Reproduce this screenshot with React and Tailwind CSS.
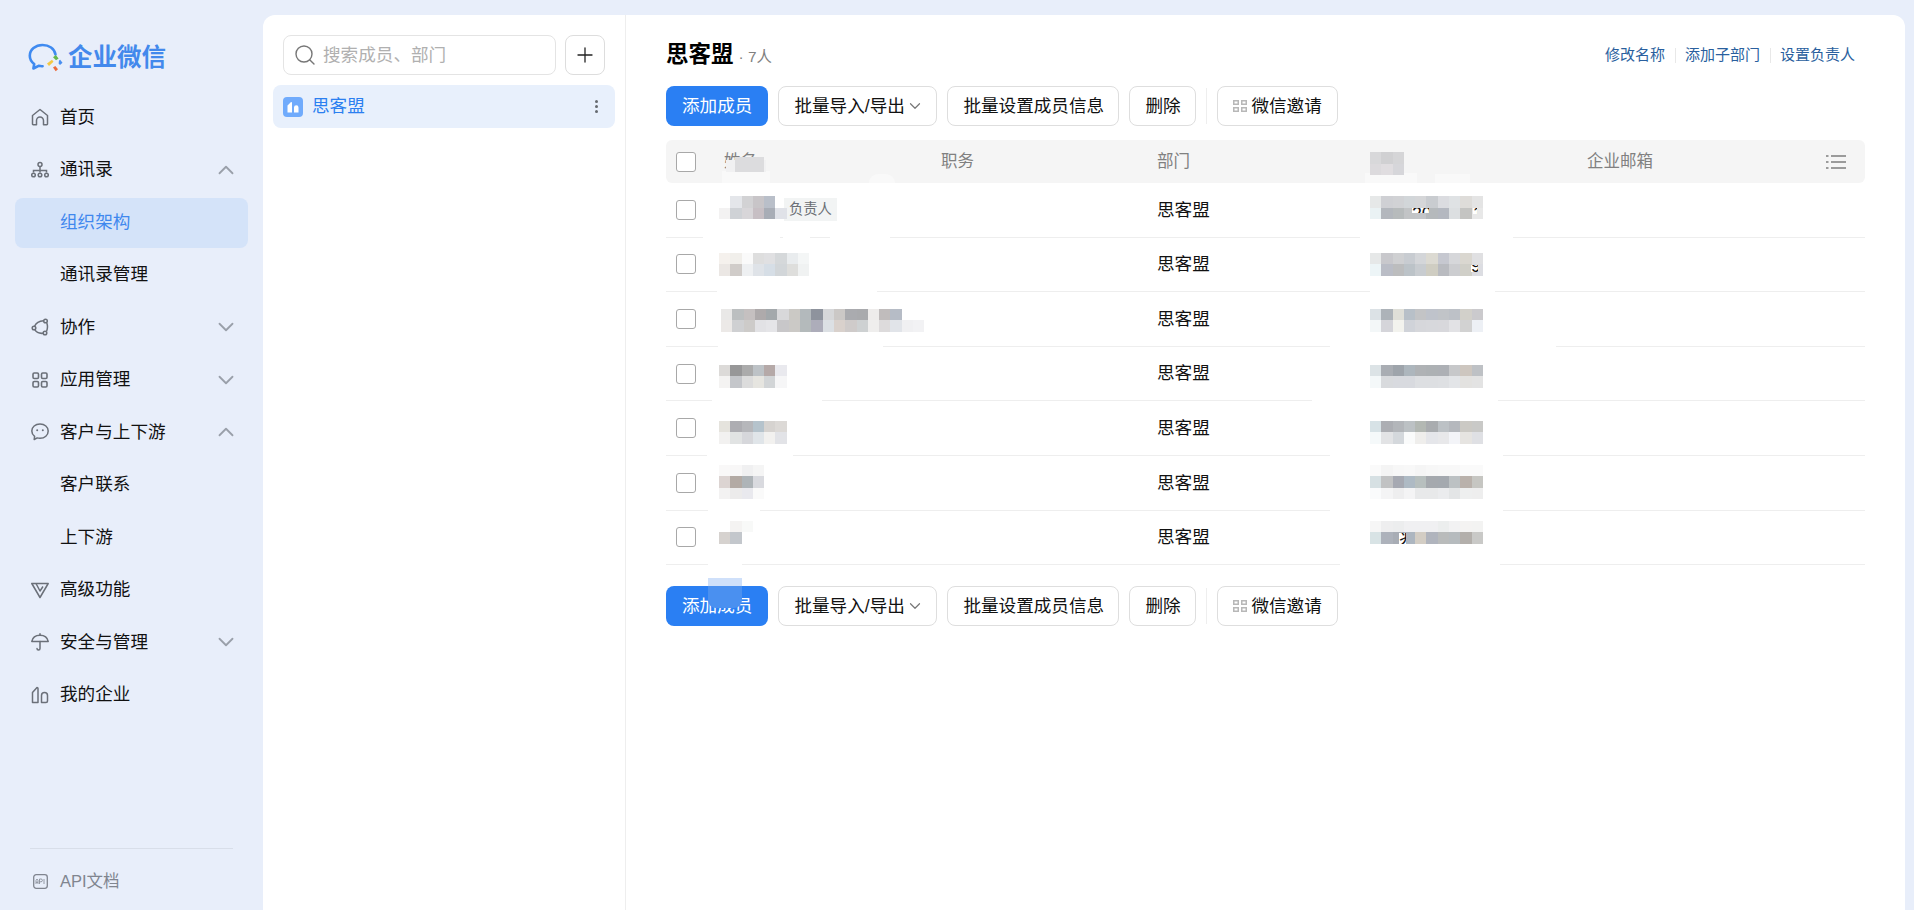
import { ChevronDown, ChevronUp, Plus, Search } from "lucide-react";

const Home = () => (
  <svg width="18" height="18" viewBox="0 0 18 18" fill="none" stroke="currentColor" strokeWidth="1.5" strokeLinejoin="round">
    <path d="M1.500 7.500 9 1.500l7.500 6V16a.7.7 0 0 1-.7.7h-3.300v-4.200a3.500 3.500 0 0 0-7 0v4.200H2.200a.7.7 0 0 1-.7-.7z" />
  </svg>
);

const Org = () => (
  <svg width="18" height="18" viewBox="0 0 18 18" fill="none" stroke="currentColor" strokeWidth="1.5">
    <circle cx="9" cy="3.500" r="2" />
    <circle cx="2.500" cy="14" r="1.800" />
    <circle cx="9" cy="14" r="1.800" />
    <circle cx="15.500" cy="14" r="1.800" />
    <path d="M2.500 11.500V9.500h13v2M9 6v5.500" />
  </svg>
);

const Collab = () => (
  <svg width="18" height="18" viewBox="0 0 18 18" fill="none" stroke="currentColor" strokeWidth="1.500">
    <circle cx="14.500" cy="3" r="1.800" />
    <circle cx="3" cy="10" r="1.800" />
    <circle cx="14" cy="15" r="1.800" />
    <path d="M12.600 2.800C8 3 5 4.800 3.600 8.200M3.800 11.700c1.600 2.800 4.400 4 8.400 3.600M15.800 5c1 2.800 1 5.300-.2 8.200" />
  </svg>
);

const Apps = () => (
  <svg width="18" height="18" viewBox="0 0 18 18" fill="none" stroke="currentColor" strokeWidth="1.600">
    <rect x="2" y="2" width="5.500" height="5.500" rx="1.200" />
    <rect x="10.500" y="2" width="5.500" height="5.500" rx="1.200" />
    <rect x="2" y="10.500" width="5.500" height="5.500" rx="1.200" />
    <rect x="10.500" y="10.500" width="5.500" height="5.500" rx="1.200" />
  </svg>
);

const Chat = () => (
  <svg width="18" height="18" viewBox="0 0 18 18" fill="none" stroke="currentColor" strokeWidth="1.500" strokeLinejoin="round">
    <path d="M9 1C4.300 1 .8 4 .8 8c0 2.200 1.100 4.100 2.800 5.400L3.200 16.500l3-1.600c.9.300 1.800.4 2.800.4 4.700 0 8.200-3.200 8.200-7.300S13.700 1 9 1z" />
    <circle cx="6.200" cy="7.200" r="1" fill="currentColor" stroke="none" />
    <circle cx="11.800" cy="7.200" r="1" fill="currentColor" stroke="none" />
  </svg>
);

const Advanced = () => (
  <svg width="18" height="18" viewBox="0 0 18 18" fill="none" stroke="currentColor" strokeWidth="1.500" strokeLinejoin="round">
    <path d="M.8 2.500h16.400L9 16.500z" />
    <path d="M5 2.500 9 10l3-4.500" />
  </svg>
);

const Umbrella = () => (
  <svg width="18" height="18" viewBox="0 0 18 18" fill="none" stroke="currentColor" strokeWidth="1.500" strokeLinecap="round" strokeLinejoin="round">
    <path d="M.8 8.500C1.500 4.500 4.800 2.200 9 2.200s7.500 2.300 8.200 6.300z" />
    <path d="M9 .8v1.400M9 8.500v7a1.500 1.500 0 0 1-3 0" />
  </svg>
);

const Company = () => (
  <svg width="18" height="18" viewBox="0 0 18 18" fill="none" stroke="currentColor" strokeWidth="1.500" strokeLinejoin="round">
    <path d="M1.500 16.500V6.500L6 1.500c.6 0 1 .4 1 1v14z" />
    <path d="M10.500 16.500v-7a3 3 0 0 1 6 0v5.500a1.500 1.500 0 0 1-1.500 1.500z" />
  </svg>
);

const ApiDoc = () => (
  <svg width="15" height="15" viewBox="0 0 15 15" fill="none">
    <rect x=".7" y=".7" width="13.600" height="13.600" rx="2.500" stroke="currentColor" strokeWidth="1.300" />
    <path d="M3 10V6.500L4 5l1 1.500V10M3 8.300h2M6.500 10V5H8a1.200 1.200 0 0 1 0 2.800H6.500M11 5v5" stroke="currentColor" strokeWidth=".8" />
  </svg>
);

const Logo = () => (
  <svg width="36" height="30" viewBox="0 0 36 30" fill="none">
    <path d="M27.500 11.500C26.500 5.500 21 2 14.500 2 7.500 2 1.800 6.700 1.800 12.800c0 3.300 1.700 6.200 4.400 8.200l-.8 4.500 5.200-2.700c1.300.3 2.600.5 4 .4" stroke="#3f8af0" strokeWidth="2.600" strokeLinecap="round" strokeLinejoin="round" />
    <path d="m19 20.500 5-3.800 1.500 2-4.500 4.300z" fill="#f4c842" />
    <path d="m25 14.200 2.800-2.200 2.800 3.500-2.600 1.800z" fill="#65b84a" />
    <path d="m31 17.500 1.200-.8 2.300 3-2.500 2.200-1.400-1.400z" fill="#4a8ff0" />
    <path d="m25 24.500 2.300-1.500 2.700 3.300-2.300 2z" fill="#ec6a3c" />
  </svg>
);

const QrIcon = () => (
  <svg width="14" height="14" viewBox="0 0 14 14" fill="#b8b8b8">
    <path d="M0 1h6v5H0zm1.500 1.500v2h3v-2zM8 1h6v5H8zm1.500 1.500v2h3v-2zM0 8h6v5H0zm1.500 1.500v2h3v-2zM8 8h6v5H8zm1.500 1.500v2h3v-2z" />
  </svg>
);

const ColumnsIcon = () => (
  <svg width="20" height="16" viewBox="0 0 20 16" stroke="#7d7d7d" strokeWidth="1.500">
    <path d="M0 2h2.500M5 2h15M0 8h2.500M5 8h15M0 14h2.500M5 14h15" />
  </svg>
);

const NAV = [
  { label: "首页", icon: Home },
  { label: "通讯录", icon: Org, arrow: "up" },
  { label: "组织架构", sub: true, active: true },
  { label: "通讯录管理", sub: true },
  { label: "协作", icon: Collab, arrow: "down" },
  { label: "应用管理", icon: Apps, arrow: "down" },
  { label: "客户与上下游", icon: Chat, arrow: "up" },
  { label: "客户联系", sub: true },
  { label: "上下游", sub: true },
  { label: "高级功能", icon: Advanced },
  { label: "安全与管理", icon: Umbrella, arrow: "down" },
  { label: "我的企业", icon: Company },
];

// redacted cells of each row, top position is from the row's top edge
const ROWS = [
  {
    owner: true,
    name: { top: 13, cells: [
      ["transparent", "e4e6ea", "d2d2d4", "c8c5c8", "b9bfc9"],
      ["f3f2f2", "cfd2d6", "d8d6d9", "c7bfc4", "a8adb6", "e0e2e8"],
    ] },
    phone: { top: 13, cells: [
      ["e6e8e8", "cfd0d4", "d1d2d5", "d2d6d9", "d5d6d8", "c9ccd0", "dbdce0", "dfe2e4", "dedcd9", "e4e4e4"],
      ["eaf2f4", "b3b7bd", "b7bbbc", "c2c4c6", "c3c5c8", "b5b9bc", "b4b8c0", "dcdfe1", "c4c4c2", "e8e8e8"],
    ] },
    gaps: [[703, 77], [783, 27], [830, 60], [1360, 153]],
    specks: [
      { x: 746, y: 25, w: 17, h: 5, text: "20", shift: -6 },
      { x: 807, y: 25, w: 4, h: 6, text: "1", shift: -6 },
    ],
  },
  {
    name: { top: 15.4, cells: [
      ["f5f1ed", "f1efeb", "fafafa", "dedede", "e0e0e2", "d5d8da", "e9ecee", "f4f6f6"],
      ["ebe7e4", "d0ccc9", "eef0f2", "dfe3e8", "d6dee6", "d2d6d9", "dededc", "f0f2f2"],
    ] },
    phone: { top: 15.4, cells: [
      ["e6e8e8", "c8c8cc", "cfd0d2", "c8ccd1", "d4d6d9", "dcdad2", "c6c8d0", "d6d7da", "dad7d0", "e0e0e2"],
      ["edf5f7", "babdc6", "bcbdbe", "bcc3c8", "c8ccd0", "cfcdc2", "b9bbc0", "cccdd0", "d0cfc8", "dcdde2"],
    ] },
    gaps: [[717, 160], [1370, 125]],
    specks: [{ x: 805, y: 27, w: 7, h: 7, text: "9", shift: -11 }],
  },
  {
    name: { top: 16.8, left: 2, cells: [
      ["e9e8e7", "bcbfc0", "c5c0c0", "aeaaab", "a3a8ab", "d8d8da", "cbc9c5", "b3b9bc", "8e939d", "d6d7d9", "cbc8c6", "aaabaf", "a9aaad", "eeeceb", "c0bcbc", "b6bcc6"],
      ["ece9e7", "cfd0d2", "cdcbc9", "e2e2e5", "e5e5e8", "c8c7c9", "cbc9c6", "b4babb", "adadba", "dce0e4", "d9d1cc", "cfcbca", "ced1d2", "efeeed", "dddbdc", "e1e4e9", "f0f0f2", "f2f2f4"],
    ] },
    phone: { top: 16.8, cells: [
      ["dce2e6", "adb3b9", "dfdfd8", "b8c0c8", "c3c4c6", "bfc3cb", "c1c4c8", "bdc1c7", "d2d0ca", "cbcacd"],
      ["f3f7f8", "d5d5da", "f3f3ee", "d0d3d9", "d6d7db", "d7d8dc", "d8d8dc", "e2e2e5", "d2d2d2", "edf0f5"],
    ] },
    gaps: [[718, 165], [1330, 226]],
  },
  {
    name: { top: 18, cells: [
      ["dcdad8", "979798", "ababab", "bdc2c6", "b5a9a8", "e9e9ee"],
      ["f4f3f2", "c4c6ca", "dcdcdc", "e6e5e0", "d2d5d7", "f6f6f7"],
    ] },
    phone: { top: 18, cells: [
      ["dce3e6", "a9adb3", "9ea4ab", "adb6bd", "afb2b5", "adb1b4", "adb0b5", "c7c8ca", "cdc6bf", "bec1c5"],
      ["f4f8f9", "d8dadd", "d8dadf", "d8dadf", "dddfe2", "dddfe2", "dee0e3", "e3e5e8", "e3e2e0", "e3e3e3"],
    ] },
    gaps: [[712, 110], [1312, 186]],
  },
  {
    name: { top: 19.600, cells: [
      ["e5e3dd", "adadb2", "b6b7bb", "b5c3cc", "d6d3d0", "dcd9d6"],
      ["f2f1f0", "e1e3e3", "d6d7db", "e0e5e9", "f2f1ef", "e2e3e7"],
    ] },
    phone: { top: 19.600, cells: [
      ["d7e2e6", "acaeb3", "b3b6ba", "bcc1c4", "b3b8b3", "a9acaf", "bcc1c5", "b5b8bd", "cbc9c4", "c9c9c7"],
      ["f5f9fa", "e2e3e5", "d4d8dc", "fafbfb", "efeeec", "e5e6ea", "e8e8ea", "f3f4f8", "e6e4e1", "dfe0e4"],
    ] },
    gaps: [[707, 86], [1330, 173]],
  },
  {
    name: { top: 9, cells: [
      ["f9f8f8", "f8f7f7", "f0f0f1", "f5f5f5"],
      ["dcd4d2", "b3aaa4", "aeb4b8", "d9dadf"],
      ["f3f2f2", "ecebeb", "e9e9ee", "fafafa"],
    ] },
    phone: { top: 9, cells: [
      ["fafafa", "f4f4f4", "f7f7f7", "f8f8f8", "f5f5f5", "f7f7f7", "f8f8f8", "f8f8f8", "fafafa", "fafafa"],
      ["d6e0e3", "c1c2c3", "a6a9b2", "aebac4", "b7bfbe", "a5a9ae", "a4a9af", "bcc1c3", "b9b1ab", "c6c6c2"],
      ["fafbfc", "f4f4f5", "eeeeef", "f4f4f5", "e8e9ea", "e8e9ea", "ebecee", "e3e5e6", "eeefef", "eeeeee"],
    ] },
    gaps: [[708, 52], [1330, 173]],
  },
  {
    name: { top: 10.400, cells: [
      ["transparent", "f4f3f2", "f8f9f8"],
      ["d6d2cf", "c3c7cc"],
    ] },
    phone: { top: 10.400, cells: [
      ["f6f6f6", "eeeeef", "ecedee", "f0f0f2", "f0f0f2", "f0f0f2", "eceeee", "f2f2f3", "f4f3f2", "f3f3f2"],
      ["d8e3e5", "adb2bb", "a8adb5", "adb6c0", "d3cdc4", "b0b4bd", "b9bbbb", "b6bbbe", "b3afab", "c9c9c7"],
    ] },
    gaps: [[708, 34], [1340, 160]],
    specks: [{ x: 733, y: 22, w: 7, h: 11, text: "兆", shift: -7 }],
  },
];

const TABLE_LEFT = 666;

function Mosaic({ left, top, cells }) {
  return (
    <div className="absolute" style={{ left, top }}>
      {cells.map((line, i) => (
        <div key={i} className="flex">
          {line.map((c, j) => (
            <div
              key={j}
              className="w-[11.300px] h-[11.500px]"
              style={{ backgroundColor: c === "transparent" ? c : `#${c}` }}
            />
          ))}
        </div>
      ))}
    </div>
  );
}

function NavItem({ item }) {
  const Icon = item.icon;
  return (
    <div
      className={`flex items-center h-[50px] rounded-lg pr-[15px] pb-[2px] ${item.sub ? "pl-[45px]" : "pl-[16px]"} ${item.active ? "bg-[#d4e3f9] text-[#3f88ee]" : "text-[#111111]"}`}
    >
      {Icon && (
        <span className="w-[18px] h-[18px] mr-[11px] text-[#6b7079] shrink-0">
          <Icon />
        </span>
      )}
      <span className="flex-1">{item.label}</span>
      {item.arrow === "up" && <ChevronUp size={26} strokeWidth={1.7} className="text-[#9aa0aa] -mr-[6px]" />}
      {item.arrow === "down" && <ChevronDown size={26} strokeWidth={1.7} className="text-[#9aa0aa] -mr-[6px]" />}
    </div>
  );
}

function Sidebar() {
  return (
    <aside className="w-[263px] h-full shrink-0 flex flex-col text-[17.6px]">
      <div className="flex items-center h-[30px] mt-[43px] ml-[28px] mb-[20px]">
        <Logo />
        <span className="ml-[4px] text-[24.500px] font-semibold text-[#4389ec]">企业微信</span>
      </div>
      <nav className="flex flex-col gap-[2.500px] mx-[15px]">
        {NAV.map((item) => (
          <NavItem key={item.label} item={item} />
        ))}
      </nav>
      <div className="mt-auto mx-[30px] border-t border-[#d8dee9] pt-[20px] pb-[17px]">
        <div className="flex items-center h-[24px] text-[#80858f] text-[16.500px]">
          <span className="ml-[3px] mr-[12px] text-[#80858f] flex">
            <ApiDoc />
          </span>
          API文档
        </div>
      </div>
    </aside>
  );
}

function DeptPane() {
  return (
    <div className="w-[363px] shrink-0 border-r border-[#eeeeee] pt-[20px] text-[17.6px]">
      <div className="flex gap-[9px] pl-[20px] pr-[20px]">
        <div className="flex-1 flex items-center h-[40px] border border-[#e4e4e4] rounded-lg pl-[9px] text-[#b0b0b0]">
          <Search size={24} strokeWidth={1.4} className="text-[#777777] mr-[6px]" />
          搜索成员、部门
        </div>
        <div className="w-[40px] h-[40px] flex items-center justify-center border border-[#dddddd] rounded-lg text-[#222222]">
          <Plus size={24} strokeWidth={1.3} />
        </div>
      </div>
      <div className="flex items-center h-[43px] mx-[10px] mt-[10px] pl-[10px] pr-[17px] rounded-lg bg-[#e8f0fc] text-[#2b7ff0]">
        <svg width="20" height="20" viewBox="0 0 20 20" className="mr-[9px]">
          <rect width="20" height="20" rx="4" fill="#70abfc" />
          <path d="M4.500 15.500V8.500L8 5c.6 0 1 .4 1 1v9.500zM11 15.500v-5a2.200 2.200 0 0 1 4.500 0v5z" fill="#ffffff" />
        </svg>
        <span className="flex-1">思客盟</span>
        <span className="flex flex-col gap-[2px]">
          <i className="w-[3px] h-[3px] rounded-full bg-[#666a70]" />
          <i className="w-[3px] h-[3px] rounded-full bg-[#666a70]" />
          <i className="w-[3px] h-[3px] rounded-full bg-[#666a70]" />
        </span>
      </div>
    </div>
  );
}

function Toolbar({ smear }) {
  const btn = "relative h-[40px] px-[15px] flex items-center whitespace-nowrap border border-[#dedede] rounded-lg bg-white";
  return (
    <div className="relative flex items-center gap-[10px] text-[17.6px] text-[#111111]">
      <div className="relative h-[40px] px-[16px] flex items-center rounded-lg bg-[#2a7ff3] text-white">
        添加成员
        {smear && (
          <>
            <div className="absolute left-[42px] top-[-8px] w-[34px] h-[8px] bg-[#cfe0fa]" />
            <div className="absolute left-[42px] top-0 w-[34px] h-[22px] rounded-b-lg bg-[#4a90f0]" />
          </>
        )}
      </div>
      <div className={`${btn} w-[159px]`}>
        批量导入/导出
        <ChevronDown size={18} strokeWidth={1.6} className="ml-[1px] shrink-0 text-[#777777]" />
      </div>
      <div className={`${btn} w-[172px]`}>批量设置成员信息</div>
      <div className={`${btn} w-[67px]`}>删除</div>
      <div className="w-px h-[36px] bg-[#eeeeee]" />
      <div className={btn}>
        <span className="mr-[4px] flex">
          <QrIcon />
        </span>
        微信邀请
      </div>
    </div>
  );
}

function Cell({ className, children }) {
  return <div className={`flex items-center ${className}`}>{children}</div>;
}

function MemberTable() {
  return (
    <div>
      <div className="relative flex items-center h-[43px] mt-[14px] rounded-md bg-[#f5f5f5] text-[16.500px] text-[#808080]">
        <Cell className="w-[58px] pl-[10px]">
          <span className="w-[20px] h-[20px] rounded-[3px] border border-[#a8a8a8] bg-white" />
        </Cell>
        <Cell className="w-[217px]">姓名</Cell>
        <Cell className="w-[216px]">职务</Cell>
        <Cell className="w-[213px]">部门</Cell>
        <Cell className="w-[217px]" />
        <Cell className="flex-1">企业邮箱</Cell>
        <span className="mr-[19px] flex">
          <ColumnsIcon />
        </span>
        {/* redaction smudges over the header */}
        <div className="absolute left-[56px] top-[31px] w-[48px] h-[12px] bg-[#f9f9f9]" />
        <div className="absolute left-[60px] top-[20px] w-[40px] h-[12px] bg-[#f1f1f2]" />
        <div className="absolute left-[69px] top-[17px] w-[29px] h-[15px] bg-[#dcdcde]" />
        <div className="absolute left-[203px] top-[34px] w-[26px] h-[9px] rounded-t-full bg-[#f9f9f9]" />
        <div className="absolute left-[699px] top-[33px] w-[52px] h-[10px] bg-[#f9f9f9]" />
        <div className="absolute left-[769px] top-[34px] w-[35px] h-[9px] bg-[#f9f9f9]" />
        <Mosaic
          left={704}
          top={12}
          cells={[
            ["d8d8da", "d0d0d2", "d5d5d7"],
            ["dcdadd", "e0dde0", "d6d6da"],
          ]}
        />
      </div>
      {ROWS.map((row, i) => (
        <div key={i} className="relative flex items-center h-[54.600px] border-b border-[#eeeeee] text-[17.6px] text-[#111111]">
          <Cell className="w-[58px] pl-[10px]">
            <span className="w-[20px] h-[20px] rounded-[3px] border border-[#a8a8a8] bg-white" />
          </Cell>
          <Cell className="w-[217px] pl-[60px]">
            {row.owner && (
              <span className="flex items-center h-[23px] px-[5px] bg-[#f2f4f4] text-[14.300px] text-[#6b6f75]">负责人</span>
            )}
          </Cell>
          <Cell className="w-[216px]" />
          <Cell className="w-[213px]">思客盟</Cell>
          {row.gaps.map(([x, w]) => (
            <div key={x} className="absolute bottom-[-1px] h-px bg-white" style={{ left: x - TABLE_LEFT, width: w }} />
          ))}
          <Mosaic left={53 + (row.name.left || 0)} top={row.name.top} cells={row.name.cells} />
          <Mosaic left={704} top={row.phone.top} cells={row.phone.cells} />
          {/* bits of the number left showing through the redaction */}
          {(row.specks || []).map((s) => (
            <div
              key={s.x}
              className="absolute overflow-hidden whitespace-nowrap bg-white leading-[24px] text-[#111111]"
              style={{ left: s.x, top: s.y, width: s.w, height: s.h }}
            >
              <div style={{ marginTop: s.shift }}>{s.text}</div>
            </div>
          ))}
        </div>
      ))}
    </div>
  );
}

function MemberPane() {
  return (
    <div className="flex-1 min-w-0 pl-[40px] pr-[40px] pt-[25px]">
      <div className="flex items-center justify-between h-[30px] mb-[16px] pr-[10px]">
        <div className="flex items-baseline">
          <span className="text-[22.500px] font-bold text-black">思客盟</span>
          <span className="ml-[5px] text-[15.400px] text-[#808080]">· 7人</span>
        </div>
        <div className="flex items-center text-[15px] text-[#2a5f9e]">
          <span>修改名称</span>
          <i className="w-px h-[15px] bg-[#e8e8e8] ml-[10px] mr-[9px]" />
          <span>添加子部门</span>
          <i className="w-px h-[15px] bg-[#e8e8e8] ml-[10px] mr-[9px]" />
          <span>设置负责人</span>
        </div>
      </div>
      <Toolbar />
      <MemberTable />
      <div className="mt-[21px]">
        <Toolbar smear />
      </div>
    </div>
  );
}

export default function App() {
  return (
    <div className="flex h-screen overflow-hidden bg-[#e8eefa] font-['Liberation_Sans','Noto_Sans_CJK_SC',sans-serif]">
      <Sidebar />
      <main className="flex flex-1 min-w-0 mt-[15px] mr-[9px] rounded-t-xl bg-white">
        <DeptPane />
        <MemberPane />
      </main>
    </div>
  );
}
